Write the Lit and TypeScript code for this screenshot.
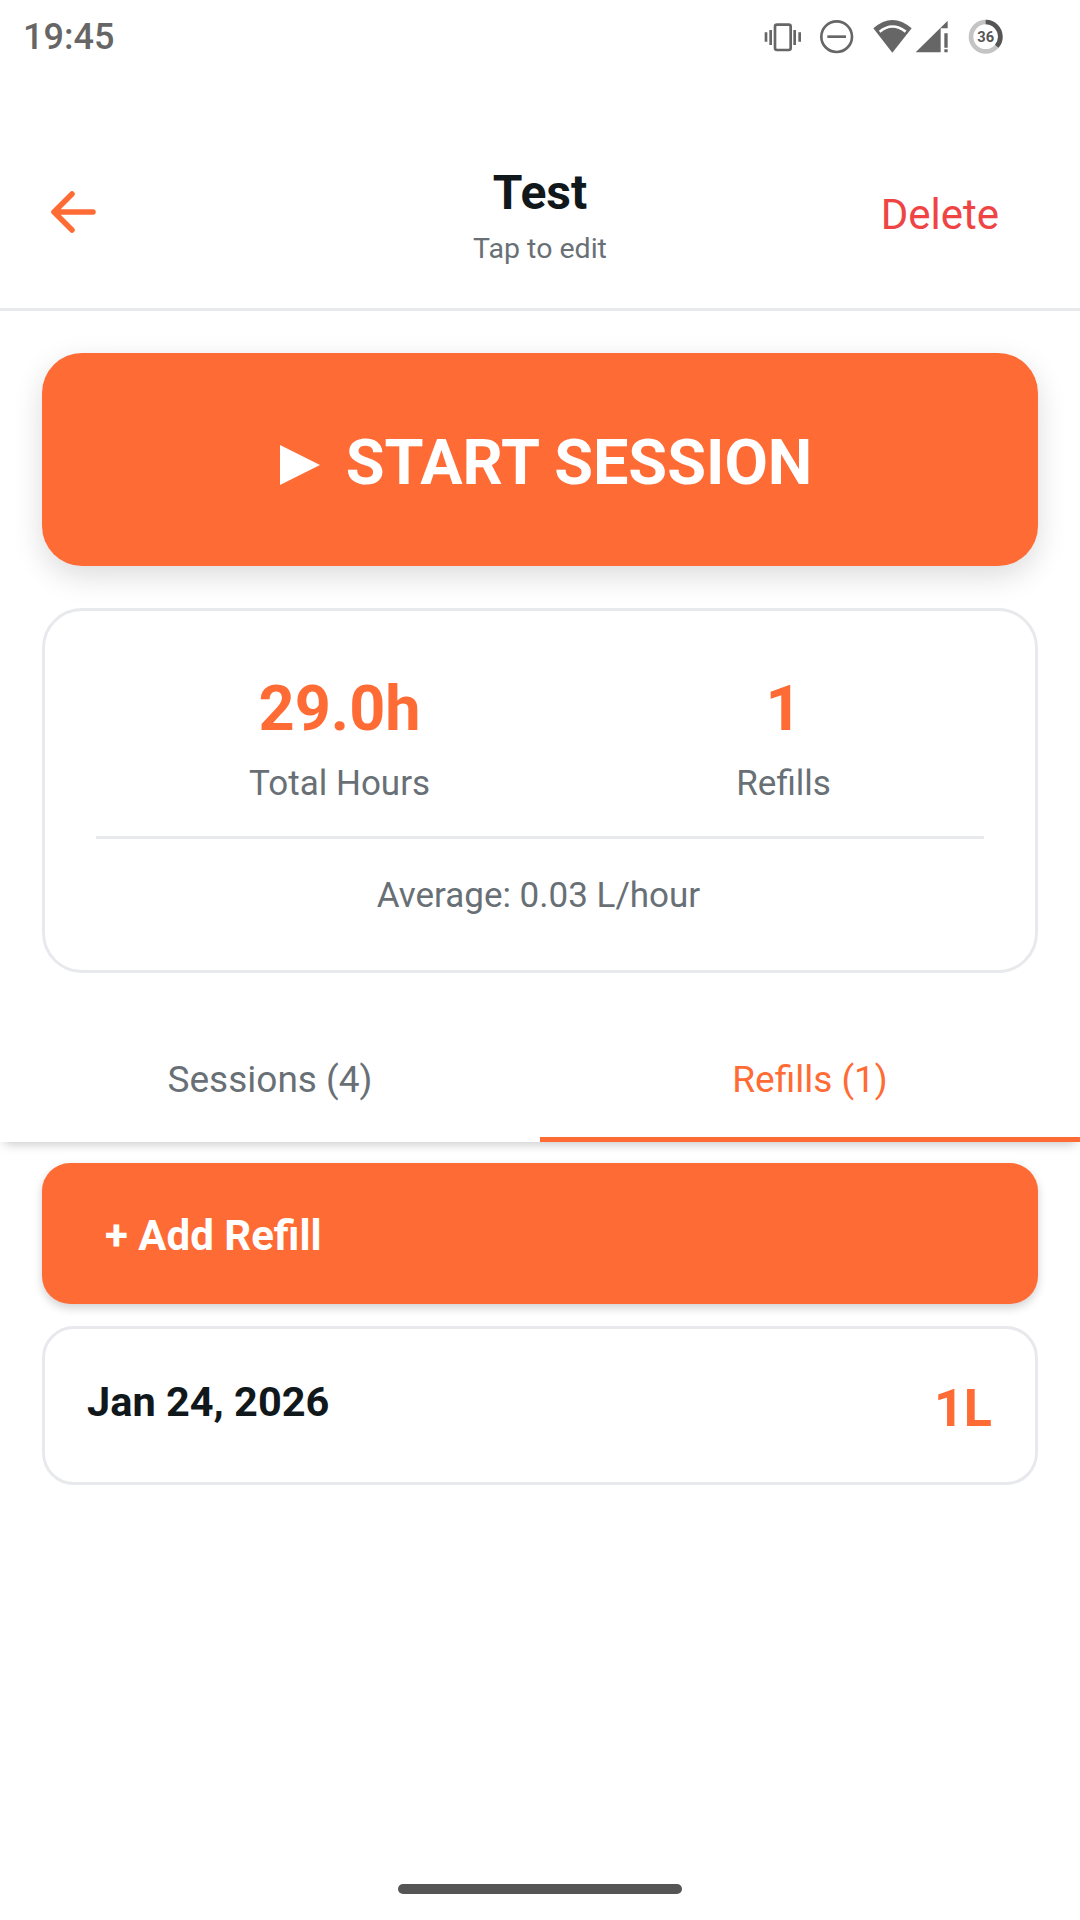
import { LitElement, html, css } from "lit";
import { customElement } from "lit/decorators.js";

@customElement("app-root")
export class AppRoot extends LitElement {
  static styles = css`
    :host { display: block; width: 1080px; height: 1920px; background: #fff; font-family: Roboto, sans-serif; color: #11181c; overflow: hidden; position: relative; }
    .status { height: 70px; display: flex; align-items: center; justify-content: space-between; padding: 0 40px 0 23px; color: #666; font-size: 36px; font-weight: 500; box-sizing: border-box; }
    .status span { padding-top: 4px; }
    .status svg { display: block; }
    .batt { font-family: Roboto, sans-serif; font-size: 44px; font-weight: 700; fill: #555; }
    .header { height: 241px; box-sizing: border-box; border-bottom: 3px solid #e8e9ec; display: flex; align-items: center; justify-content: space-between; padding: 46px 81px 0 50px; position: relative; }
    .back { display: block; }
    .titles { position: absolute; left: 0; right: 0; top: 96px; text-align: center; }
    .title { font-size: 48px; font-weight: 700; line-height: 54px; }
    .sub { font-size: 28.5px; color: #687076; line-height: 34px; margin-top: 12px; }
    .delete { color: #ef4444; font-size: 42px; padding-top: 4px; }
    .main { padding: 42px 42px 0; }
    .start { height: 213px; border-radius: 40px; background: #ff6b35; color: #fff; display: flex; align-items: center; justify-content: center; gap: 26px; font-size: 63px; font-weight: 700; box-shadow: 0 10px 30px rgba(0,0,0,.14); padding: 6px 0 0 12px; box-sizing: border-box; }
    .start svg { display: block; margin-top: 4px; }
    .stats { margin-top: 42px; height: 365px; box-sizing: border-box; border: 3px solid #e8e9ec; border-radius: 40px; padding: 0 51px; background: #fff; }
    .cols { display: flex; justify-content: space-around; height: 225px; border-bottom: 3px solid #e8e9ec; box-sizing: content-box; }
    .col { text-align: center; padding-top: 63px; }
    .val { font-size: 63px; font-weight: 700; color: #ff6b35; line-height: 70px; }
    .lbl { font-size: 35px; color: #687076; line-height: 40px; margin-top: 20px; }
    .avg { text-align: center; font-size: 35px; color: #687076; line-height: 40px; margin-top: 37px; padding-right: 3px; }
    .tabs { margin-top: 29px; height: 140px; display: grid; grid-template-columns: 540px 540px; box-shadow: 0 6px 10px -4px rgba(0,0,0,.22); background: #fff; position: relative; box-sizing: border-box; }
    .tab { display: flex; align-items: center; justify-content: center; font-size: 37px; color: #687076; box-sizing: border-box; padding-top: 14px; }
    .tab.on { color: #ff6b35; border-bottom: 5px solid #ff6b35; padding-top: 19px; }
    .list { padding: 21px 42px 0; }
    .add { height: 141px; border-radius: 28px; background: #ff6b35; color: #fff; font-size: 42px; font-weight: 700; display: flex; align-items: center; padding: 4px 0 0 63px; box-sizing: border-box; box-shadow: 0 4px 10px rgba(0,0,0,.18); }
    .refill { margin-top: 22px; height: 159px; box-sizing: border-box; border: 3px solid #e8e9ec; border-radius: 32px; padding: 0 43px 0 42px; display: flex; justify-content: space-between; background: #fff; }
    .date { font-size: 41.5px; font-weight: 700; line-height: 46px; margin-top: 50px; }
    .amt { font-size: 52px; font-weight: 700; color: #ff6b35; line-height: 60px; margin-top: 50px; }
    .home { position: absolute; left: 398px; top: 1884px; width: 284px; height: 10px; border-radius: 5px; background: #555; }
  `;

  render() {
    return html`
      <div class="status">
        <span>19:45</span>
        <svg width="300" height="70" viewBox="0 0 900 210">
          <g fill="none" stroke="#666" stroke-width="8">
            <rect x="105" y="74" width="47" height="76" rx="6" />
            <path d="M92 90v45M164 90v45M78 97v28M179 97v28" />
            <circle cx="290" cy="110" r="46" />
            <path d="M262 110h56" />
          </g>
          <path d="M400 85Q457 35 515 85L457 158z" fill="#666" />
          <path d="M419 95Q457 64 497 95" fill="none" stroke="#fff" stroke-width="8" />
          <path d="M527 157 623 62V85H602V157zM613 100h10v43h-10zM613 148h10v9h-10z" fill="#666" />
          <circle cx="737" cy="110" r="44" fill="none" stroke="#c4c4c4" stroke-width="14" />
          <circle cx="737" cy="110" r="44" fill="none" stroke="#555" stroke-width="14" stroke-dasharray="100 176" transform="rotate(-90 737 110)" />
          <text class="batt" x="737" y="126" text-anchor="middle">36</text>
        </svg>
      </div>
      <div class="header">
        <svg class="back" width="46" height="42" viewBox="0 0 46 42">
          <path d="M4 21h39M22 3 4 21l18 18" fill="none" stroke="#ff6b35" stroke-width="5.5" stroke-linecap="round" stroke-linejoin="round" />
        </svg>
        <div class="titles">
          <div class="title">Test</div>
          <div class="sub">Tap to edit</div>
        </div>
        <span class="delete">Delete</span>
      </div>
      <div class="main">
        <div class="start">
          <svg width="40" height="40" viewBox="0 0 40 40"><path d="M0 0l40 20L0 40z" fill="#fff" /></svg>
          <span>START SESSION</span>
        </div>
        <div class="stats">
          <div class="cols">
            <div class="col"><div class="val">29.0h</div><div class="lbl">Total Hours</div></div>
            <div class="col"><div class="val">1</div><div class="lbl">Refills</div></div>
          </div>
          <div class="avg">Average: 0.03 L/hour</div>
        </div>
      </div>
      <div class="tabs">
        <div class="tab">Sessions (4)</div>
        <div class="tab on">Refills (1)</div>
      </div>
      <div class="list">
        <div class="add">+ Add Refill</div>
        <div class="refill">
          <div class="date">Jan 24, 2026</div>
          <div class="amt">1L</div>
        </div>
      </div>
      <div class="home"></div>
    `;
  }
}
